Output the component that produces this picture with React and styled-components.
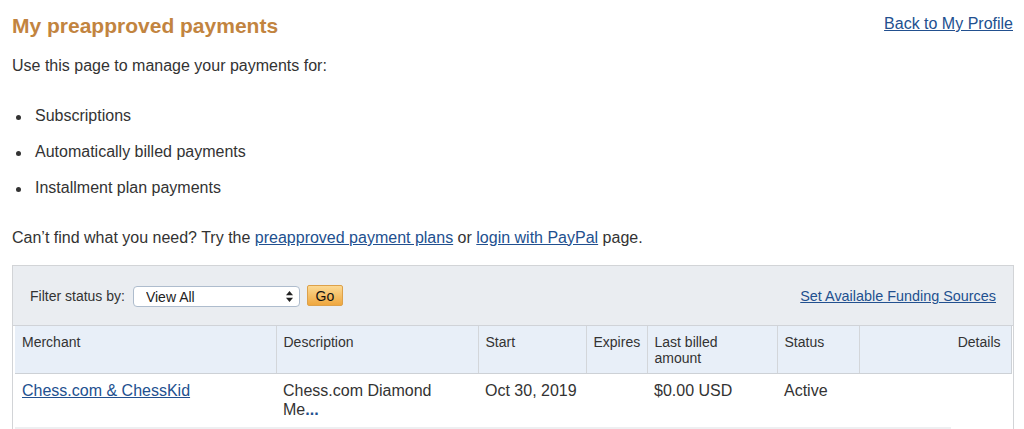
import React from "react";
import styled, { createGlobalStyle } from "styled-components";

const GlobalStyle = createGlobalStyle`
  html, body { margin: 0; padding: 0; background: #fff; }
  body { font-family: "Liberation Sans", Arial, sans-serif; color: #333; }
`;

const Page = styled.div`
  padding: 14px 10px 0 12px;
  font-size: 16px;
`;

const TitleRow = styled.div`
  display: flex;
  justify-content: space-between;
  align-items: flex-start;
`;

const Title = styled.h1`
  margin: 0;
  font-size: 21px;
  line-height: 24px;
  font-weight: bold;
  color: #c2843f;
`;

const Link = styled.a`
  color: #22508f;
  text-decoration: underline;
  font-size: ${(p) => p.$size || 16}px;
  cursor: pointer;
`;

const TopLink = styled(Link)`
  margin-top: 1px;
  margin-right: 1px;
  line-height: 18px;
`;

const Intro = styled.p`
  margin: 19px 0 0;
  line-height: 18.4px;
`;

const List = styled.ul`
  list-style: none;
  margin: 32px 0 0;
  padding: 0 0 0 4px;
`;

const Item = styled.li`
  display: flex;
  align-items: center;
  line-height: 18.4px;
  & + & { margin-top: 17.6px; }
  &::before {
    content: "";
    width: 5px;
    height: 5px;
    border-radius: 50%;
    background: #333;
    margin: 1px 14px 0 0;
  }
`;

const Help = styled.p`
  margin: 31px 0 0;
  line-height: 18.4px;
`;

const Panel = styled.div`
  margin-top: 18px;
  border: 1px solid #d2d4d7;
  background: #fff;
`;

const PanelHeader = styled.div`
  display: flex;
  align-items: center;
  justify-content: space-between;
  height: 59px;
  padding: 0 17px;
  background: #eaedf1;
  border-bottom: 1px solid #d0d3d8;
`;

const Filter = styled.div`
  display: flex;
  align-items: center;
  font-size: 14px;
`;

const FilterLabel = styled.span`
  margin-right: 8px;
`;

const SelectWrap = styled.div`
  position: relative;
  width: 167px;
  height: 21px;
  margin-top: 2px;
`;

const Select = styled.select`
  appearance: none;
  -webkit-appearance: none;
  box-sizing: border-box;
  width: 100%;
  height: 100%;
  margin: 0;
  padding: 0 0 0 12px;
  border: 1px solid #aebccd;
  border-radius: 4px;
  background: #fff;
  font-family: "Liberation Sans", Arial, sans-serif;
  font-size: 14px;
  color: #222;
  outline: none;
`;

const Arrows = styled.svg`
  position: absolute;
  right: 7px;
  top: 5px;
  pointer-events: none;
`;

const GoButton = styled.button`
  box-sizing: border-box;
  width: 36px;
  height: 21px;
  margin-left: 7px;
  padding: 0;
  border: 1px solid #dda14a;
  border-radius: 2px;
  background: linear-gradient(#fcd993, #efa73e);
  font-family: "Liberation Sans", Arial, sans-serif;
  font-size: 14px;
  color: #111;
`;

const TableArea = styled.div`
  padding: 0 2px;
`;

const Table = styled.table`
  width: 996px;
  border-collapse: collapse;
  table-layout: fixed;
`;

const Th = styled.th`
  width: ${(p) => p.$w}px;
  box-sizing: border-box;
  padding: 8px ${(p) => (p.$right ? 10 : 7)}px 7px 7px;
  background: #e8eff8;
  border-bottom: 1px solid #cdd1d6;
  border-left: ${(p) => (p.$first ? "none" : "1px solid #d3d6da")};
  border-right: ${(p) => (p.$right ? "1px solid #cdd1d6" : "none")};
  text-align: ${(p) => (p.$right ? "right" : "left")};
  vertical-align: top;
  font-weight: normal;
  font-size: 14px;
  line-height: 16px;
  color: #333;
`;

const Td = styled.td`
  padding: 8px 7px 8px;
  vertical-align: top;
  font-size: 16px;
  line-height: 18.4px;
  color: #333;
`;

const Desc = styled.span`
  display: inline-block;
  max-width: 165px;
`;

const More = styled.span`
  color: #22508f;
  font-weight: bold;
`;

const BottomBand = styled.div`
  width: 936px;
  height: 10px;
  background: #eeeff1;
`;

const columns = [
  { label: ["Merchant"], w: 261 },
  { label: ["Description"], w: 202 },
  { label: ["Start"], w: 108 },
  { label: ["Expires"], w: 61 },
  { label: ["Last billed", "amount"], w: 130 },
  { label: ["Status"], w: 82 },
  { label: ["Details"], w: 152, right: true },
];

export default function App() {
  return (
    <>
      <GlobalStyle />
      <Page>
        <TitleRow>
          <Title>My preapproved payments</Title>
          <TopLink>Back to My Profile</TopLink>
        </TitleRow>
        <Intro>Use this page to manage your payments for:</Intro>
        <List>
          <Item>Subscriptions</Item>
          <Item>Automatically billed payments</Item>
          <Item>Installment plan payments</Item>
        </List>
        <Help>
          Can’t find what you need? Try the <Link>preapproved payment plans</Link> or{" "}
          <Link>login with PayPal</Link> page.
        </Help>
        <Panel>
          <PanelHeader>
            <Filter>
              <FilterLabel>Filter status by:</FilterLabel>
              <SelectWrap>
                <Select defaultValue="all">
                  <option value="all">View All</option>
                  <option value="active">Active</option>
                  <option value="cancelled">Cancelled</option>
                </Select>
                <Arrows width="7" height="11" viewBox="0 0 7 11">
                  <path d="M3.5 0 L7 4.2 L0 4.2 Z" fill="#222" />
                  <path d="M3.5 11 L7 6.8 L0 6.8 Z" fill="#222" />
                </Arrows>
              </SelectWrap>
              <GoButton>Go</GoButton>
            </Filter>
            <Link $size={14.4}>Set Available Funding Sources</Link>
          </PanelHeader>
          <TableArea>
            <Table>
              <thead>
                <tr>
                  {columns.map((c, i) => (
                    <Th key={c.label.join(" ")} $w={c.w} $first={i === 0} $right={c.right}>
                      {c.label.map((line, j) => (
                        <React.Fragment key={line}>
                          {j > 0 && <br />}
                          {line}
                        </React.Fragment>
                      ))}
                    </Th>
                  ))}
                </tr>
              </thead>
              <tbody>
                <tr>
                  <Td>
                    <Link>Chess.com &amp; ChessKid</Link>
                  </Td>
                  <Td>
                    <Desc>
                      Chess.com Diamond Me<More>...</More>
                    </Desc>
                  </Td>
                  <Td>Oct 30, 2019</Td>
                  <Td></Td>
                  <Td>$0.00 USD</Td>
                  <Td>Active</Td>
                  <Td></Td>
                </tr>
              </tbody>
            </Table>
            <BottomBand />
          </TableArea>
        </Panel>
      </Page>
    </>
  );
}
